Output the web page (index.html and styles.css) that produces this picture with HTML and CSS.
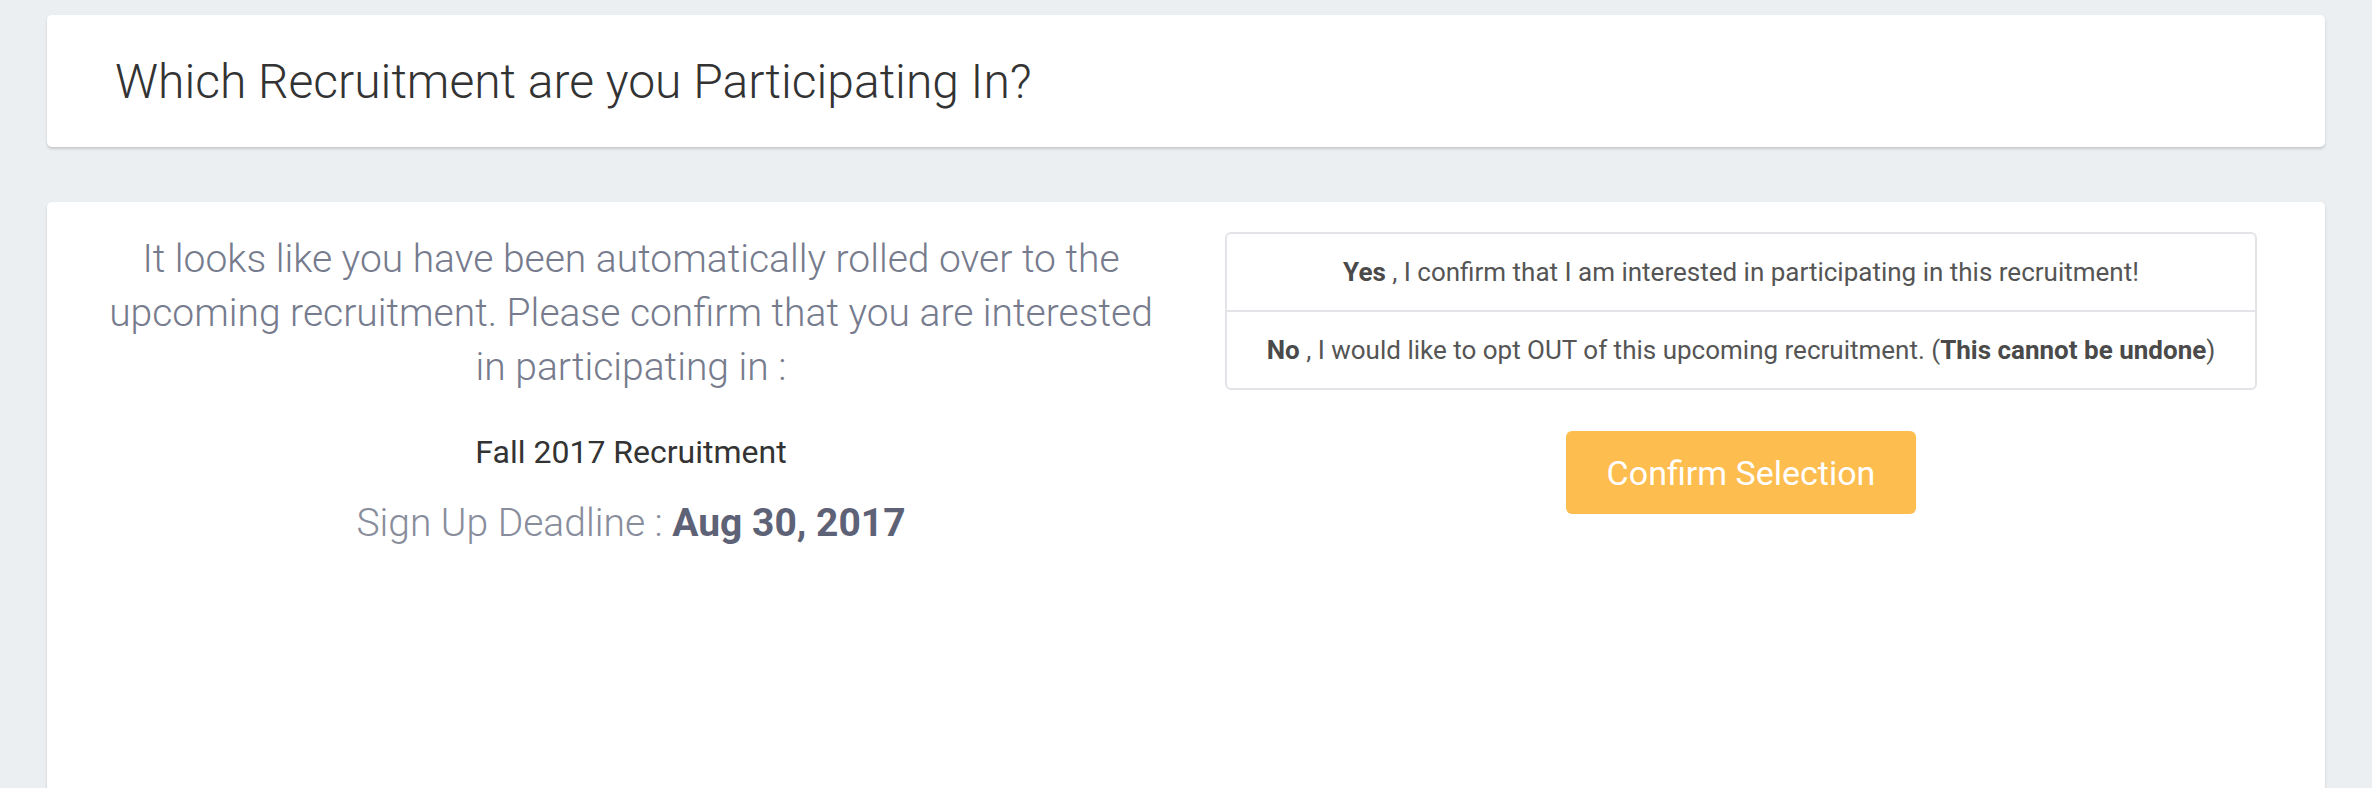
FILE: index.html
```html
<!DOCTYPE html>
<html lang="en">
<head>
	<meta charset="UTF-8">
	<title>Recruitment</title>
	<link rel="stylesheet" href="styles.css">
</head>
<body>
	<section class="card heading">
		<h1>Which Recruitment are you Participating In?</h1>
	</section>
	<main class="card content">
		<div class="col info">
			<p class="message">It looks like you have been automatically rolled over to the upcoming recruitment. Please confirm that you are interested in participating in :</p>
			<p class="term">Fall 2017 Recruitment</p>
			<p class="deadline">Sign Up Deadline : <b>Aug 30, 2017</b></p>
		</div>
		<div class="col choice">
			<ul class="options">
				<li><b>Yes</b>&nbsp;, I confirm that I am interested in participating in this recruitment!</li>
				<li><b>No</b>&nbsp;, I would like to opt OUT of this upcoming recruitment. (<b>This cannot be undone</b>)</li>
			</ul>
			<button class="confirm">Confirm Selection</button>
		</div>
	</main>
</body>
</html>
```

FILE: styles.css
```css
body {
	margin: 0;
	padding: 15px 47px 0 47px;
	background-color: #eceff1;
	font-family: Roboto, "Liberation Sans", sans-serif;
	overflow: hidden;
}
.card {
	background-color: #fff;
	border-radius: 5px;
	box-shadow: 0 2px 3px rgba(0,0,0,.16);
}
/* heading */
.card.heading {
	height: 132px;
	display: flex;
	align-items: center;
	padding: 0 68px;
}
.card.heading h1 {
	margin: 0;
	font-size: 48px;
	font-weight: 300;
	color: #333;
}
/* content */
.card.content {
	margin-top: 55px;
	min-height: 700px;
	padding: 30px 29px;
	display: grid;
	grid-template-columns: 1fr 1fr;
	align-items: start;
}
.col.info {
	padding: 0 26px;
	text-align: center;
}
.col.info p {
	margin: 0;
}
.col.info p.message {
	font-size: 39px;
	line-height: 54px;
	font-weight: 300;
	color: #767b8d;
}
.col.info p.term {
	margin-top: 34px;
	font-size: 32px;
	line-height: 48px;
	color: #333;
}
.col.info p.deadline {
	margin-top: 19px;
	font-size: 39px;
	line-height: 56px;
	font-weight: 300;
	color: #888d9c;
}
.col.info p.deadline b {
	font-weight: 700;
	color: #5d6276;
}
.col.choice {
	padding: 0 41px;
	display: flex;
	flex-direction: column;
	align-items: center;
}
ul.options {
	list-style: none;
	margin: 0;
	padding: 0;
	width: 100%;
	border: 2px solid #e3e3e8;
	border-radius: 6px;
}
ul.options li {
	height: 76px;
	display: flex;
	align-items: center;
	justify-content: center;
	font-size: 26px;
	color: #555;
	white-space: pre;
}
ul.options li + li {
	border-top: 2px solid #e3e3e8;
}
ul.options li b {
	color: #4a4a4a;
	font-weight: 700;
}
button.confirm {
	margin-top: 41px;
	width: 350px;
	height: 83px;
	border: none;
	border-radius: 6px;
	background-color: #febd4f;
	color: #fff;
	font-family: Roboto, "Liberation Sans", sans-serif;
	font-size: 34px;
}
```
